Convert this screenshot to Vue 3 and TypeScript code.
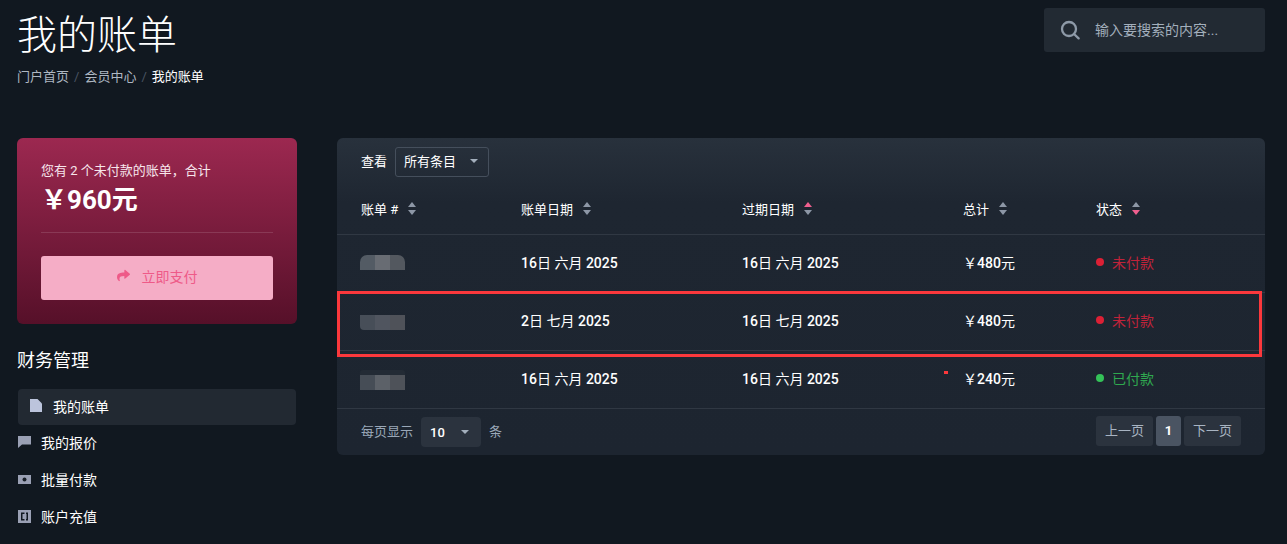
<template>
  <div class="page">
    <header class="top">
      <div class="title-block">
        <h1>我的账单</h1>
        <nav class="crumbs">
          <a>门户首页</a><i>/</i><a>会员中心</a><i>/</i><b>我的账单</b>
        </nav>
      </div>
      <div class="search">
        <svg width="20" height="20" viewBox="0 0 20 20" fill="none" stroke="#8e9aa8" stroke-width="2.3">
          <circle cx="9" cy="9" r="7" />
          <path d="M14 14l4.6 4.4" stroke-linecap="round" />
        </svg>
        <span>输入要搜索的内容...</span>
      </div>
    </header>

    <div class="layout">
      <aside class="side">
        <section class="due">
          <p class="due-text">您有 2 个未付款的账单，合计</p>
          <p class="due-sum">￥960元</p>
          <hr />
          <button class="pay">
            <svg width="13" height="13" viewBox="0 0 512 512" fill="#ee5a88">
              <path d="M503.691 189.836L327.687 37.851C312.281 24.546 288 35.347 288 56.015v80.053C127.371 137.907 0 170.1 0 322.326c0 61.441 39.581 122.309 83.333 154.132 13.653 9.931 33.111-2.533 28.077-18.631C66.066 312.814 132.917 274.316 288 272.085V360c0 20.7 24.3 31.453 39.687 18.164l176.004-152c11.071-9.562 11.086-26.753 0-36.328z" />
            </svg>
            <span>立即支付</span>
          </button>
        </section>

        <h2>财务管理</h2>
        <ul class="menu">
          <li class="active">
            <svg width="12" height="13" viewBox="0 0 12 13" fill="#bcc4dc"><path d="M0 0h7.5L12 4.5V13H0z" /></svg>
            我的账单
          </li>
          <li>
            <svg width="13" height="12" viewBox="0 0 13 12" fill="#9aa0b4"><path d="M0 0h13v8.5H4L0 12z" /></svg>
            我的报价
          </li>
          <li>
            <svg width="13" height="9" viewBox="0 0 13 9"><path fill="#9aa0b4" d="M0 0h13v9H0z" /><circle cx="6.5" cy="4.5" r="2" fill="#1a2029" /></svg>
            批量付款
          </li>
          <li>
            <svg width="13" height="13" viewBox="0 0 13 13" fill="#9aa0b4"><path fill-rule="evenodd" d="M0 0h13v13H0zM3 2.5h3.5V4H4.5v5h2v1.5H3zM8 2.5h2v8H8V9h.5V4H8z" /></svg>
            账户充值
          </li>
        </ul>
      </aside>

      <main class="panel">
        <div class="toolbar">
          <span>查看</span>
          <div class="filter">所有条目<em class="caret"></em></div>
        </div>

        <div class="grid head">
          <div v-for="col in columns" :key="col.label" class="th">
            {{ col.label }}
            <span class="sort">
              <em class="up" :class="{ hot: col.hot === 'up' }"></em>
              <em class="down" :class="{ hot: col.hot === 'down' }"></em>
            </span>
          </div>
        </div>

        <div v-for="(row, i) in rows" :key="i" class="grid row">
          <div>
            <span class="mosaic" :class="row.mosaic">
              <em v-for="c in row.blur" :key="c" :style="{ background: c }"></em>
            </span>
          </div>
          <div v-for="cell in [row.date, row.due, row.total]" :key="cell" class="cell">
            <template v-for="(part, p) in split(cell)" :key="p">
              <b v-if="p % 2">{{ part }}</b><template v-else>{{ part }}</template>
            </template>
          </div>
          <div class="cell status" :class="row.paid ? 'paid' : 'unpaid'">
            <em></em>{{ row.paid ? '已付款' : '未付款' }}
          </div>
        </div>

        <footer class="foot">
          <div class="size">
            <span>每页显示</span>
            <div class="size-box">10<em class="caret"></em></div>
            <span>条</span>
          </div>
          <div class="pager">
            <a>上一页</a>
            <a class="on">1</a>
            <a>下一页</a>
          </div>
        </footer>

        <div class="mark-box"></div>
        <div class="mark-dot"></div>
      </main>
    </div>
  </div>
</template>

<script setup lang="ts">
interface Column {
  label: string;
  hot?: 'up' | 'down';
}

interface Row {
  date: string;
  due: string;
  total: string;
  paid: boolean;
  mosaic: string;
  blur: string[];
}

const columns: Column[] = [
  { label: '账单 #' },
  { label: '账单日期' },
  { label: '过期日期', hot: 'up' },
  { label: '总计' },
  { label: '状态', hot: 'down' },
];

const rows: Row[] = [
  { date: '16日 六月 2025', due: '16日 六月 2025', total: '￥480元', paid: false, mosaic: 'm1', blur: ['#535b64', '#686c73', '#53585f'] },
  { date: '2日 七月 2025', due: '16日 七月 2025', total: '￥480元', paid: false, mosaic: 'm2', blur: ['#474e58', '#50555f', '#4f5259'] },
  { date: '16日 六月 2025', due: '16日 六月 2025', total: '￥240元', paid: true, mosaic: 'm3', blur: ['#464d56', '#5c6168', '#4e5259'] },
];

// odd entries are the digit runs, those are medium weight
const split = (text: string) => text.split(/(\d+)/);
</script>

<style>
body {
  margin: 0;
  background: #111820;
}
</style>

<style scoped>
.page {
  height: 544px;
  overflow: hidden;
  box-sizing: border-box;
  padding: 0 22px 0 17px;
  background: #111820;
  color: #fff;
  font-family: Roboto, "Noto Sans CJK SC", sans-serif;
  font-size: 13px;
}
.top {
  display: flex;
  justify-content: space-between;
  align-items: flex-start;
  height: 138px;
}
h1 {
  margin: 12px 0 0;
  font-size: 40px;
  line-height: 48px;
  font-weight: 300;
}
.crumbs {
  display: flex;
  align-items: center;
  margin-top: 7px;
  line-height: 20px;
  color: #aeb7c2;
}
.crumbs i {
  margin: 0 5px;
  font-style: normal;
  color: #4b5563;
}
.crumbs b {
  font-weight: 400;
  color: #fff;
}
.search {
  display: flex;
  align-items: center;
  gap: 15px;
  box-sizing: border-box;
  width: 221px;
  height: 44px;
  margin-top: 8px;
  padding-left: 16px;
  border-radius: 3px;
  background: #222a33;
  color: #a3afbc;
  font-size: 14px;
}
.search span {
  margin-top: -2px;
}
.layout {
  display: flex;
  gap: 40px;
  align-items: flex-start;
}
.side {
  width: 280px;
  flex: none;
}
.due {
  box-sizing: border-box;
  height: 186px;
  padding: 24px 24px 0;
  border-radius: 6px;
  background: linear-gradient(180deg, #9c2850, #561029);
}
.due p {
  margin: 0;
}
.due-text {
  line-height: 18px;
  color: #f7e6ec;
}
.due-sum {
  margin-top: 2px !important;
  font-size: 26px;
  line-height: 36px;
  font-weight: 700;
}
hr {
  margin: 14px 0 23px;
  border: 0;
  border-top: 1px solid rgba(255, 255, 255, 0.13);
}
.pay {
  display: flex;
  align-items: center;
  justify-content: center;
  gap: 12px;
  width: 100%;
  height: 44px;
  padding: 0 0 5px;
  border: 0;
  border-radius: 3px;
  background: #f5adc6;
  color: #ee5a88;
  font: inherit;
  font-size: 14px;
}
h2 {
  margin: 24px 0 15px;
  font-size: 18px;
  line-height: 26px;
  font-weight: 400;
}
.menu {
  margin: 0;
  padding: 0;
  list-style: none;
  font-size: 14px;
}
.menu li {
  display: flex;
  align-items: center;
  box-sizing: border-box;
  height: 37px;
  padding: 0 0 3px 1px;
}
.menu li svg {
  margin-right: 10px;
}
.menu li.active {
  height: 36px;
  margin: 0 1px;
  padding-left: 12px;
  border-radius: 4px;
  background: #222932;
}
.menu li.active svg {
  margin-right: 11px;
}
.panel {
  position: relative;
  width: 928px;
  height: 317px;
  border-radius: 6px;
  background: linear-gradient(180deg, #28313c 0, #1e2631 65px, #1d2530 100%);
}
.toolbar {
  display: flex;
  align-items: center;
  gap: 8px;
  box-sizing: border-box;
  height: 46px;
  padding: 2px 24px 0;
}
.toolbar span {
  margin-top: -3px;
}
.filter {
  display: flex;
  align-items: center;
  justify-content: space-between;
  box-sizing: border-box;
  width: 94px;
  height: 30px;
  padding: 0 10px 3px 8px;
  border: 1px solid #454f5c;
  border-radius: 3px;
}
.caret {
  display: block;
  width: 0;
  height: 0;
  border-left: 4px solid transparent;
  border-right: 4px solid transparent;
  border-top: 4px solid #a3afbc;
}
.grid {
  display: grid;
  grid-template-columns: 160px 221px 221px 133px 1fr;
  box-sizing: border-box;
  padding: 0 24px;
  align-items: center;
  border-bottom: 1px solid #303843;
}
.head {
  height: 51px;
}
.th {
  display: flex;
  align-items: center;
  gap: 10px;
  margin-top: -2px;
}
.sort {
  display: flex;
  flex-direction: column;
  gap: 3px;
}
.sort em {
  display: block;
  width: 0;
  height: 0;
  border-left: 4px solid transparent;
  border-right: 4px solid transparent;
}
.sort .up {
  border-bottom: 5px solid #8d97a6;
}
.sort .down {
  border-top: 5px solid #8d97a6;
}
.sort .up.hot {
  border-bottom-color: #ef5f8e;
}
.sort .down.hot {
  border-top-color: #ef5f8e;
}
.row {
  height: 58px;
  font-size: 14px;
}
.cell {
  margin-top: -4px;
}
.cell b {
  font-weight: 500;
}
.mosaic {
  display: flex;
  width: 45px;
  margin-left: -1px;
  overflow: hidden;
}
.mosaic em {
  flex: 1;
}
.m1 {
  height: 15px;
  margin-top: -3px;
  border-radius: 7px 7px 0 0;
}
.m2 {
  height: 15px;
  margin-top: 1px;
  border-radius: 0 0 0 4px;
}
.m3 {
  height: 20px;
  border-radius: 3px 3px 0 0;
  background: #232b35;
}
.m3 em {
  margin-top: 5px;
}
.status {
  display: flex;
  align-items: center;
  gap: 8px;
}
.status em {
  width: 8px;
  height: 8px;
  border-radius: 50%;
}
.unpaid {
  color: #c0233a;
}
.unpaid em {
  background: #dc2035;
}
.paid {
  color: #2fa84f;
}
.paid em {
  background: #34c258;
}
.foot {
  display: flex;
  justify-content: space-between;
  align-items: center;
  height: 46px;
  padding: 0 24px;
  color: #9aa8b8;
}
.size {
  display: flex;
  align-items: center;
  gap: 8px;
}
.size span {
  margin-top: -4px;
}
.size-box {
  display: flex;
  align-items: center;
  justify-content: space-between;
  box-sizing: border-box;
  width: 60px;
  height: 30px;
  padding: 0 12px 0 9px;
  border-radius: 4px;
  background: #2b333e;
  color: #fff;
  font-weight: 500;
}
.pager {
  display: flex;
  gap: 3px;
  margin-top: -2px;
}
.pager a {
  width: 57px;
  height: 30px;
  line-height: 29px;
  text-align: center;
  border-radius: 3px;
  background: #2b333e;
  color: #a8b4c2;
}
.pager a.on {
  width: 25px;
  background: #4a5462;
  color: #fff;
  font-weight: 700;
}
.mark-box {
  position: absolute;
  left: 0;
  top: 153px;
  width: 925px;
  height: 66px;
  box-sizing: border-box;
  border: 3px solid #fb383c;
}
.mark-dot {
  position: absolute;
  left: 607px;
  top: 233px;
  width: 4px;
  height: 3px;
  background: #fb383c;
}
</style>
